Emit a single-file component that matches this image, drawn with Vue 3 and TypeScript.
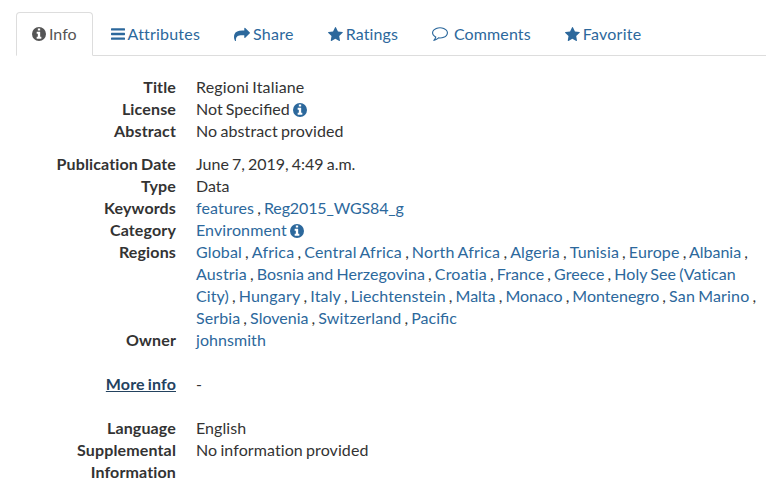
<script setup lang="ts">
const infoPath = 'M768 0a768 768 0 1 1 0 1536A768 768 0 0 1 768 0zM1024 1248v-160c0-18-14-32-32-32h-96V544c0-18-14-32-32-32H544c-18 0-32 14-32 32v160c0 18 14 32 32 32h96v320h-96c-18 0-32 14-32 32v160c0 18 14 32 32 32h448c18 0 32-14 32-32zM896 352V192c0-18-14-32-32-32H672c-18 0-32 14-32 32v160c0 18 14 32 32 32h192c18 0 32-14 32-32z'
const starPath = 'M1664 557c0 22-16 43-31 58l-363 354 86 500c1 7 1 13 1 20 0 26-12 50-41 50-14 0-28-5-40-12l-449-236-449 236c-13 7-26 12-40 12-29 0-42-24-42-50 0-7 1-13 2-20l86-500L20 615C6 600-10 579-10 557c0-37 38-46 68-51l502-73L785-22c11-23 32-50 58-50s48 27 59 50l225 455 502 73c29 5 68 14 68 51z'
interface Tab { label: string; icon: string; box: string; path: string; wide?: boolean }
const tabs: Tab[] = [
  { label: 'Info', icon: 'info', box: '0 0 1536 1536', path: infoPath },
  { label: 'Attributes', icon: 'bars', box: '0 0 1536 1280', path: 'M64 0h1408q64 0 64 64v128q0 64-64 64H64q-64 0-64-64V64Q0 0 64 0zM64 512h1408q64 0 64 64v128q0 64-64 64H64q-64 0-64-64V576q0-64 64-64zM64 1024h1408q64 0 64 64v128q0 64-64 64H64q-64 0-64-64v-128q0-64 64-64z' },
  { label: 'Share', icon: 'share', box: '0 0 1792 1536', path: 'M1792 640q0 26-19 45l-512 512q-19 19-45 19t-45-19-19-45V896H928q-98 0-175.500 6t-154 21.500-133 42.500-105.500 69.500-80 101-48.500 138.500-17.500 181q0 55 5 123 0 6 2.500 23.500t2.500 26.500q0 15-8.500 25t-23.500 10q-16 0-28-17-7-9-13-22t-13.500-30-10.500-24Q0 1286 0 1120q0-199 53-333 162-403 875-403h224V128q0-26 19-45t45-19 45 19l512 512q19 19 19 45z' },
  { label: 'Ratings', icon: 'star', box: '-10 -72 1707 1611', path: starPath },
  { label: 'Comments', icon: 'comment', box: '0 0 1792 1536', path: 'M896 128q-204 0-381.500 69.500T232.500 385 128 640q0 112 71.500 213.500T401 1029l87 50-27 96q-24 91-70 172 152-63 275-171l43-38 57 6q69 8 130 8 204 0 381.500-69.500t282-187.500T1664 640t-104.500-255-282-187.500T896 128zM1792 640q0 174-120 321.500t-326 233-450 85.500q-70 0-145-8-198 175-460 242-49 14-114 22h-5q-15 0-27-10.500t-16-27.500v-1q-3-4-.5-12t2-10 4.500-9.500l6-9 7-8.500 8-9q7-8 31-34.500t34.500-38 31-39.500 32.500-51 27-59 26-76q-157-89-247.500-220T0 640q0-174 120-321.500t326-233T896 0t450 85.500 326 233T1792 640z', wide: true },
  { label: 'Favorite', icon: 'star', box: '-10 -72 1707 1611', path: starPath },
]
const regions = ['Global', 'Africa', 'Central Africa', 'North Africa', 'Algeria', 'Tunisia', 'Europe', 'Albania', 'Austria', 'Bosnia and Herzegovina', 'Croatia', 'France', 'Greece', 'Holy See (Vatican City)', 'Hungary', 'Italy', 'Liechtenstein', 'Malta', 'Monaco', 'Montenegro', 'San Marino', 'Serbia', 'Slovenia', 'Switzerland', 'Pacific']
interface Row { term: string; text?: string; links?: string[]; info?: boolean; more?: boolean }
const groups: Row[][] = [
  [{ term: 'Title', text: 'Regioni Italiane' }, { term: 'License', text: 'Not Specified', info: true }, { term: 'Abstract', text: 'No abstract provided' }],
  [{ term: 'Publication Date', text: 'June 7, 2019, 4:49 a.m.' }, { term: 'Type', text: 'Data' }, { term: 'Keywords', links: ['features', 'Reg2015_WGS84_g'] }, { term: 'Category', links: ['Environment'], info: true }, { term: 'Regions', links: regions }, { term: 'Owner', links: ['johnsmith'] }],
  [{ term: 'More info', text: '-', more: true }],
  [{ term: 'Language', text: 'English' }, { term: 'Supplemental Information', text: 'No information provided' }],
]
// Only the "fi" pair is joined; the font's other ligatures stay off.
const joined = (s: string) => s.includes('fi')

const extra: Record<string, number> = {
  Attributes: 2, Share: 1.4, Ratings: 0.6, Comments: 1, Favorite: 2,
  'Regioni Italiane': 2.5, 'No abstract provided': 2, 'No information provided': 2, English: 0.5,
  features: 1, Reg2015_WGS84_g: -2, Environment: 1.2, johnsmith: 0.5,
  Global: 0.7, Africa: 1.3, 'Central Africa': 3, 'North Africa': 3, Algeria: 1, Tunisia: 1, Europe: 1,
  Austria: 1, 'Bosnia and Herzegovina': 1.5, Croatia: 1.6, France: 0.6, Greece: 0.4, 'Holy See (Vatican City)': 1.6,
  Hungary: 1.5, Italy: 0.8, Liechtenstein: 1, 'San Marino': 1.5, Serbia: 0.6, Switzerland: 1.6,
}
const tracking = (s: string) => (extra[s] ? { letterSpacing: `${(extra[s] / s.length).toFixed(3)}px` } : undefined)
</script>

<template>
  <main class="panel">
    <nav class="tabs">
      <a v-for="(t, i) in tabs" :key="t.label" class="tab" :class="{ active: i === 0, wide: t.wide }">
        <svg :class="['icon', t.icon]" :viewBox="t.box"><path :d="t.path" fill-rule="evenodd" /></svg><span :style="tracking(t.label)">{{ t.label }}</span>
      </a>
    </nav>
    <dl v-for="(g, gi) in groups" :key="gi" class="group">
      <div v-for="r in g" :key="r.term" class="row">
        <dt><a v-if="r.more" class="more">{{ r.term }}</a><template v-else>{{ r.term }}</template></dt>
        <dd>
          <span v-if="r.text" :class="{ joined: joined(r.text) }" :style="tracking(r.text)">{{ r.text }}</span>
          <template v-for="(l, li) in r.links" :key="l"><a :class="{ joined: joined(l) }" :style="tracking(l)">{{ l }}</a><template v-if="li < r.links!.length - 1">{{ ' , ' }}</template></template>
          <template v-if="r.info">{{ ' ' }}<svg class="icon info hint" viewBox="0 0 1536 1536"><path :d="infoPath" fill-rule="evenodd" /></svg></template>
        </dd>
      </div>
    </dl>
  </main>
</template>

<style>
body { background: #fff; overflow: hidden; }
</style>
<style scoped>
.panel { box-sizing: border-box; width: 766px; padding: 12px 0 0 16px; font: 16px/22px Lato, sans-serif; color: #333; font-variant-ligatures: none; word-spacing: -1px; }
.joined { font-variant-ligatures: normal; }
.tabs { display: flex; box-sizing: border-box; height: 44px; border-bottom: 1px solid #ddd; margin-bottom: 20px; }
.tab { box-sizing: border-box; display: flex; align-items: center; height: 44px; padding: 0 15px; margin-right: 2px; border: 1px solid transparent; border-radius: 4px 4px 0 0; color: #2c689c; white-space: nowrap; }
.tab.active { border-color: #ddd; border-bottom-color: #fff; color: #555; background: #fff; }
.icon { display: block; flex: none; fill: currentColor; margin-right: 3px; }
.info { width: 14px; height: 14px; }
.bars { width: 14px; height: 12px; }
.share { width: 16px; height: 14px; }
.star { width: 15px; height: 14px; }
.comment { width: 16px; height: 14px; }
.wide .icon { margin-right: 6px; }
.group { margin: 0 0 11px; }
.group:nth-of-type(n+2) { margin-bottom: 22px; }
.row { display: grid; grid-template-columns: 160px 565px; column-gap: 20px; }
dt { font-weight: 700; text-align: right; letter-spacing: 0.14px; }
dd { margin: 0; }
a { color: #2c689c; }
.more { color: #23425f; text-decoration: underline; }
.hint { display: inline-block; vertical-align: -2px; margin: 0; color: #2c689c; }
</style>
